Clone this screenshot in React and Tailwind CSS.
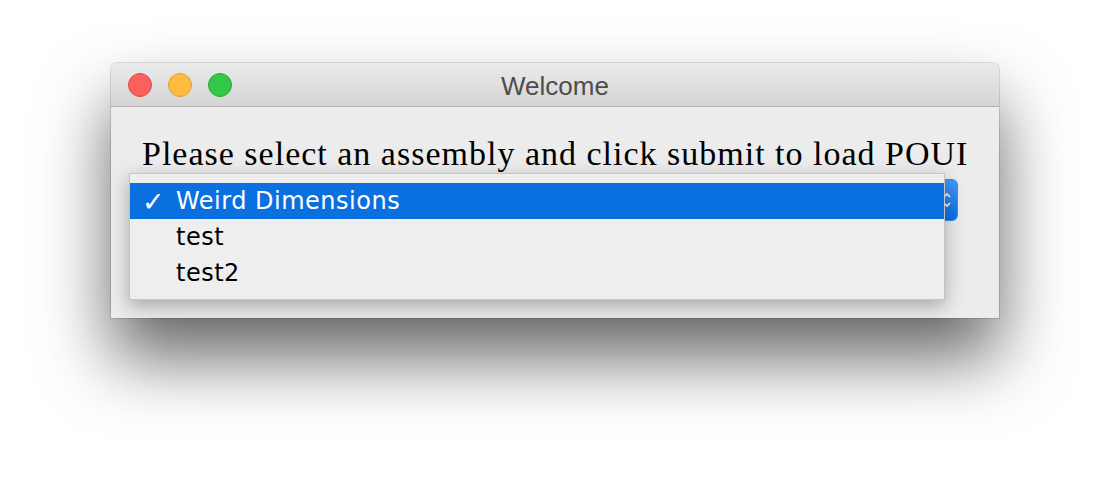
export default function App() {
  return (
    <div className="w-[1110px] h-[478px] bg-white pt-[63px] pl-[111px] overflow-hidden">
      {/* Window */}
      <div className="relative w-[888px] h-[255px] rounded-t-[6px] bg-[#ececec] shadow-[0_40px_70px_rgba(0,0,0,0.6),0_0_0_1px_rgba(0,0,0,0.12)]">
        {/* Title bar */}
        <div className="relative flex items-center h-[44px] rounded-t-[6px] bg-gradient-to-b from-[#ebebeb] to-[#d5d5d5] border-b border-[#b1b1b1]">
          <div className="flex items-center gap-[16px] pl-[17px]">
            <span className="w-[24px] h-[24px] rounded-full bg-[#fc605c] border border-[#de4a45]" />
            <span className="w-[24px] h-[24px] rounded-full bg-[#fdbc40] border border-[#dea235]" />
            <span className="w-[24px] h-[24px] rounded-full bg-[#34c84a] border border-[#27aa35]" />
          </div>
          <div className="absolute inset-0 flex items-center justify-center pt-[3px] text-[26px] text-[#4d4d4d] font-['Liberation_Sans',Arial,sans-serif]">
            Welcome
          </div>
        </div>

        {/* Content */}
        <div className="pl-[31px] pt-[28px]">
          <p className="text-[34px] leading-[38px] tracking-[1px] text-black font-['Liberation_Serif','Times_New_Roman',serif] whitespace-nowrap">
            Please select an assembly and click submit to load POUI
          </p>
          {/* popup button underneath */}
          <div className="flex justify-end mt-[6px] w-[816px]">
            <div className="w-[60px] h-[42px] rounded-[6px] bg-gradient-to-b from-[#3f9bf8] to-[#0a6ee8] border border-[#3c8ff0] flex items-center justify-end pr-[6px]">
              <svg width="8" height="18" viewBox="0 0 8 18" fill="none" stroke="white" strokeWidth="1.6">
                <path d="M1 6 L4 3 L7 6" />
                <path d="M1 12 L4 15 L7 12" />
              </svg>
            </div>
          </div>
        </div>

        {/* Dropdown menu */}
        <div className="absolute left-[18px] top-[110px] w-[816px] pt-[9px] pb-[8px] bg-[#eeeeee] border border-[#c4c4c4] shadow-[0_6px_18px_rgba(0,0,0,0.3)] font-['DejaVu_Sans','Verdana',sans-serif] text-[24px] tracking-[0.5px] text-black">
          <div className="flex items-center h-[36px] bg-[#0a70e0] text-white">
            <span className="w-[46px] pl-[12px] text-[27px] leading-none">✓</span>
            <span>Weird Dimensions</span>
          </div>
          <div className="flex items-center h-[36px]">
            <span className="w-[46px]" />
            <span>test</span>
          </div>
          <div className="flex items-center h-[36px]">
            <span className="w-[46px]" />
            <span>test2</span>
          </div>
        </div>
      </div>
    </div>
  )
}
